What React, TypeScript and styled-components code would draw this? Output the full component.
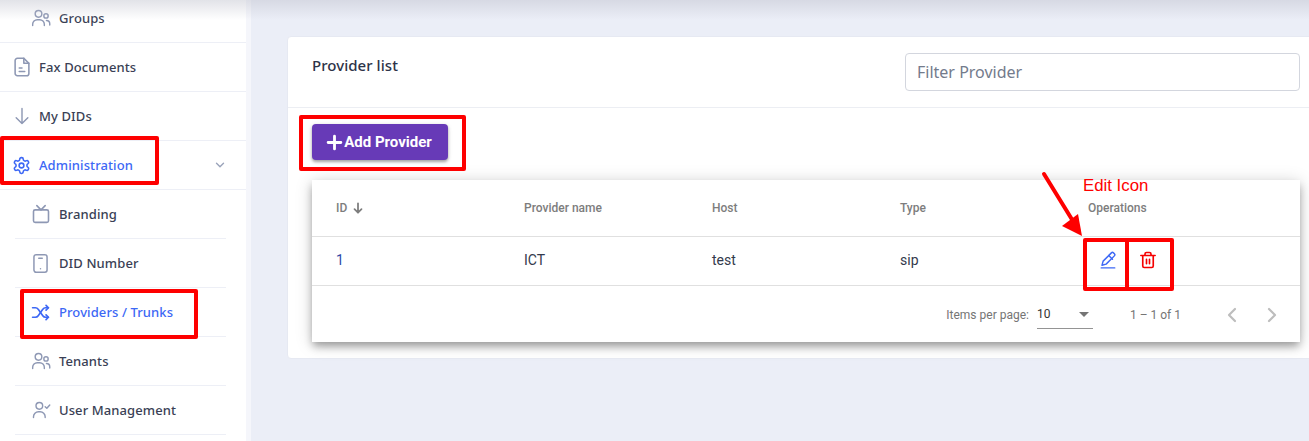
import React from "react";
import styled, { createGlobalStyle } from "styled-components";

const Global = createGlobalStyle`
  html, body { margin: 0; padding: 0; }
  body { width: 1309px; height: 441px; overflow: hidden; background: #ebeef7; font-family: "Noto Sans", sans-serif; }
`;

const Page = styled.div`
  position: relative;
  display: flex;
  width: 1309px;
  height: 441px;
  overflow: hidden;
`;

const Sidebar = styled.aside`
  width: 251px;
  height: 441px;
  box-sizing: border-box;
  flex: none;
  background: #fff;
  border-right: 5px solid #f5f6fb;
  display: flex;
  flex-direction: column;
`;

const TopShade = styled.div`
  position: absolute;
  left: 0;
  top: 0;
  width: 100%;
  height: 20px;
  background: linear-gradient(to bottom, rgba(190, 192, 204, 0.45), rgba(190, 192, 204, 0));
  pointer-events: none;
`;

const Row = styled.div<{ $sub?: boolean; $inset?: boolean; $active?: boolean; $first?: boolean }>`
  height: ${(p) => (p.$first ? 36 : 48)}px;
  padding-bottom: ${(p) => (p.$first ? 6 : 0)}px;
  box-sizing: content-box;
  flex: none;
  display: flex;
  align-items: center;
  gap: ${(p) => (p.$sub ? 10 : 9)}px;
  margin-left: ${(p) => (p.$inset ? 15 : 0)}px;
  margin-right: ${(p) => (p.$inset ? 20 : 0)}px;
  padding-left: ${(p) => (p.$inset ? 17 : p.$sub ? 32 : 13)}px;
  padding-right: 20px;
  border-bottom: 1px solid #edeff6;
  font-size: 13px;
  font-weight: 500;
  letter-spacing: 0.1px;
  color: ${(p) => (p.$active ? "#3d68f5" : "#3a3f55")};
`;

const IconSlot = styled.span<{ $active?: boolean }>`
  width: 17px;
  height: 18px;
  flex: none;
  display: flex;
  align-items: center;
  justify-content: center;
  color: ${(p) => (p.$active ? "#3d68f5" : "#8e98b4")};
`;

const RowLabel = styled.span`
  flex: 1;
`;

const Chevron = styled.span`
  display: flex;
  margin-right: -1px;
  color: #9aa3ba;
`;

const Main = styled.main`
  flex: 1;
  min-width: 0;
  padding: 36px 0 0 36px;
`;

const Panel = styled.section`
  width: 1040px;
  height: 323px;
  background: #fff;
  border: 1px solid #e6e9f2;
  border-radius: 4px;
  box-sizing: border-box;
`;

const PanelHead = styled.header`
  height: 70px;
  border-bottom: 1px solid #eceef3;
  display: flex;
  justify-content: space-between;
  padding: 0 26px 0 24px;
`;

const PanelTitle = styled.h2`
  margin: 18px 0 0;
  font-size: 15px;
  line-height: 20px;
  font-weight: 500;
  letter-spacing: 0.05px;
  color: #2d3348;
`;

const FilterInput = styled.div`
  width: 395px;
  height: 38px;
  margin-top: 16px;
  box-sizing: border-box;
  border: 1px solid #d3d6de;
  border-radius: 4px;
  padding-left: 11px;
  display: flex;
  align-items: center;
  font-size: 16px;
  color: #737b8c;
`;

const PanelBody = styled.div`
  padding: 16px 0 0 24px;
`;

const AddButton = styled.button`
  height: 36px;
  width: 136px;
  border: 0;
  border-radius: 4px;
  background: #673ab7;
  color: #fff;
  display: flex;
  align-items: center;
  justify-content: center;
  gap: 1px;
  padding: 0 2px 0 0;
  font-family: Roboto, sans-serif;
  font-size: 15px;
  font-weight: 700;
  box-shadow: 0 2px 3px rgba(0, 0, 0, 0.3), 0 1px 5px rgba(0, 0, 0, 0.12);
`;

const TableCard = styled.div`
  width: 988px;
  height: 162px;
  margin-top: 20px;
  background: #fff;
  font-family: Roboto, sans-serif;
  box-shadow: 0 5px 8px -1px rgba(0, 0, 0, 0.32), 0 2px 16px rgba(0, 0, 0, 0.18);
`;

const TableRow = styled.div<{ $head?: boolean }>`
  display: grid;
  grid-template-columns: 188px 188px 188px 188px 1fr;
  align-items: center;
  height: ${(p) => (p.$head ? 56 : 46)}px;
  padding-bottom: ${(p) => (p.$head ? 0 : 2)}px;
  padding-left: 24px;
  border-bottom: 1px solid #e0e0e0;
  font-size: ${(p) => (p.$head ? 12 : 14)}px;
  font-weight: ${(p) => (p.$head ? 500 : 400)};
  color: ${(p) => (p.$head ? "#7d7d7d" : "#333a4c")};
`;

const HeadId = styled.span`
  display: flex;
  align-items: center;
  gap: 4px;
  color: #7d7d7d;
`;

const IdLink = styled.span`
  color: #3049a8;
`;

const Ops = styled.div`
  display: flex;
  align-items: center;
  gap: 22px;
  padding-left: 11px;
`;

const OpIcon = styled.span<{ $danger?: boolean }>`
  display: flex;
  color: ${(p) => (p.$danger ? "#f50000" : "#3d68f5")};
`;

const Pager = styled.div`
  height: 57px;
  display: flex;
  align-items: center;
  justify-content: flex-end;
  font-size: 12px;
  color: #757575;
`;

const PagerLabel = styled.span`
  margin-right: 8px;
`;

const PageSelect = styled.div`
  width: 56px;
  height: 28px;
  box-sizing: border-box;
  border-bottom: 1px solid #949494;
  display: flex;
  align-items: center;
  justify-content: space-between;
  padding-right: 4px;
  color: #333;
`;

const Caret = styled.span`
  width: 0;
  height: 0;
  border-left: 5px solid transparent;
  border-right: 5px solid transparent;
  border-top: 5px solid #757575;
`;

const Range = styled.span`
  margin-left: 37px;
  margin-right: 39px;
`;

const PagerNav = styled.span`
  display: flex;
  gap: 16px;
  margin-right: 16px;
  color: #bdbdbd;
`;

const Mark = styled.div<{ $x: number; $y: number; $w: number; $h: number }>`
  position: absolute;
  left: ${(p) => p.$x}px;
  top: ${(p) => p.$y}px;
  width: ${(p) => p.$w}px;
  height: ${(p) => p.$h}px;
  box-sizing: border-box;
  border: 4px solid #fe0000;
  border-radius: 2px;
  pointer-events: none;
`;

const Note = styled.div`
  position: absolute;
  left: 1083px;
  top: 176px;
  font-family: "Liberation Sans", Arial, sans-serif;
  font-size: 16.8px;
  line-height: 20px;
  color: #fe0000;
`;

const Arrow = styled.svg`
  position: absolute;
  left: 1036px;
  top: 168px;
`;

const Stroke = ({ size = 18, sw = 1.6, children }: { size?: number; sw?: number; children: React.ReactNode }) => (
  <svg width={size} height={size} viewBox="0 0 24 24" fill="none" stroke="currentColor" strokeWidth={sw} strokeLinecap="round" strokeLinejoin="round" style={{ flex: "none" }}>
    {children}
  </svg>
);

const UsersIcon = () => (
  <Stroke size={20} sw={1.7}>
    <circle cx="9" cy="7" r="4" />
    <path d="M2 21v-1.500A5.500 5.500 0 0 1 7.500 14h3a5.500 5.500 0 0 1 5.500 5.500V21" />
    <circle cx="18" cy="9.500" r="2.600" />
    <path d="M18.500 15a4 4 0 0 1 4 4v1.500" />
  </Stroke>
);
const DocIcon = () => (
  <Stroke size={22} sw={1.7}>
    <path d="M14 2.500H7a2.500 2.500 0 0 0-2.500 2.500v14A2.500 2.500 0 0 0 7 21.500h10a2.500 2.500 0 0 0 2.500-2.500V8z" />
    <path d="M14 2.500V8h5.500M9 13h3M9 17h6" />
  </Stroke>
);
const DownIcon = () => (
  <Stroke size={20} sw={1.7}>
    <path d="M12 3v18M5 14l7 7 7-7" />
  </Stroke>
);
const GearIcon = () => (
  <Stroke size={19} sw={2}>
    <circle cx="12" cy="12" r="3" />
    <path d="M12.220 2h-.440a2 2 0 0 0-2 2v.180a2 2 0 0 1-1 1.730l-.430.250a2 2 0 0 1-2 0l-.150-.080a2 2 0 0 0-2.730.730l-.220.380a2 2 0 0 0 .730 2.730l.150.100a2 2 0 0 1 1 1.720v.510a2 2 0 0 1-1 1.740l-.150.090a2 2 0 0 0-.730 2.730l.220.380a2 2 0 0 0 2.730.730l.150-.080a2 2 0 0 1 2 0l.430.250a2 2 0 0 1 1 1.730V20a2 2 0 0 0 2 2h.440a2 2 0 0 0 2-2v-.180a2 2 0 0 1 1-1.730l.430-.250a2 2 0 0 1 2 0l.150.080a2 2 0 0 0 2.730-.730l.220-.390a2 2 0 0 0-.730-2.730l-.150-.080a2 2 0 0 1-1-1.740v-.500a2 2 0 0 1 1-1.740l.150-.090a2 2 0 0 0 .730-2.730l-.220-.380a2 2 0 0 0-2.730-.730l-.150.080a2 2 0 0 1-2 0l-.430-.250a2 2 0 0 1-1-1.730V4a2 2 0 0 0-2-2z" />
  </Stroke>
);
const TvIcon = () => (
  <Stroke size={20} sw={1.9}>
    <rect x="3" y="7" width="18" height="15" rx="2" />
    <path d="M17 2l-5 5-5-5" />
  </Stroke>
);
const PhoneIcon = () => (
  <Stroke size={21} sw={1.7}>
    <rect x="4.500" y="2" width="15" height="20" rx="2.500" />
    <path d="M10 6h4M12 18h.010" />
  </Stroke>
);
const ShuffleIcon = () => (
  <Stroke size={19} sw={2.1}>
    <path d="M2 6h3.500c1.500 0 2.800.700 3.600 1.900l5.800 8.200c.800 1.200 2.100 1.900 3.600 1.900H22" />
    <path d="M2 18h3.500c1.500 0 2.800-.700 3.600-1.900l5.800-8.200C15.700 6.700 17 6 18.500 6H22" />
    <path d="M19 3l3 3-3 3M19 15l3 3-3 3" />
  </Stroke>
);
const UserCheckIcon = () => (
  <Stroke size={20} sw={1.7}>
    <circle cx="10" cy="7" r="4" />
    <path d="M3 21v-1a6 6 0 0 1 6-6h2a6 6 0 0 1 6 6v1" />
    <path d="M17 8l2 2 3.500-4" />
  </Stroke>
);
const PencilIcon = () => (
  <Stroke size={18} sw={1.9}>
    <path d="M3 22.500h18" />
    <path d="M14.500 4.500l2-2a2 2 0 0 1 2.800 0l1.200 1.200a2 2 0 0 1 0 2.800L9.500 17.500 4 19l1.500-5.500z" />
    <path d="M13 6l5 5" />
  </Stroke>
);
const TrashIcon = () => (
  <Stroke size={18} sw={2.2}>
    <path d="M2.500 6h19M19 6v14a2 2 0 0 1-2 2H7a2 2 0 0 1-2-2V6M8 6V4a2 2 0 0 1 2-2h4a2 2 0 0 1 2 2v2" />
    <path d="M10 11v6M14 11v6" />
  </Stroke>
);

type Item = { label: string; icon: React.ReactNode; sub?: boolean; inset?: boolean; active?: boolean; chevron?: boolean; first?: boolean };

const items: Item[] = [
  { label: "Groups", icon: <UsersIcon />, sub: true, first: true },
  { label: "Fax Documents", icon: <DocIcon /> },
  { label: "My DIDs", icon: <DownIcon /> },
  { label: "Administration", icon: <GearIcon />, active: true, chevron: true },
  { label: "Branding", icon: <TvIcon />, sub: true, inset: true },
  { label: "DID Number", icon: <PhoneIcon />, sub: true, inset: true },
  { label: "Providers / Trunks", icon: <ShuffleIcon />, sub: true, inset: true, active: true },
  { label: "Tenants", icon: <UsersIcon />, sub: true, inset: true },
  { label: "User Management", icon: <UserCheckIcon />, sub: true, inset: true },
];

export default function App() {
  return (
    <Page>
      <Global />
      <Sidebar>
        {items.map((it) => (
          <Row key={it.label} $sub={it.sub} $inset={it.inset} $active={it.active} $first={it.first}>
            <IconSlot $active={it.active}>{it.icon}</IconSlot>
            <RowLabel>{it.label}</RowLabel>
            {it.chevron && (
              <Chevron>
                <Stroke size={14} sw={2.4}>
                  <path d="M6 9l6 6 6-6" />
                </Stroke>
              </Chevron>
            )}
          </Row>
        ))}
      </Sidebar>
      <Main>
        <Panel>
          <PanelHead>
            <PanelTitle>Provider list</PanelTitle>
            <FilterInput>Filter Provider</FilterInput>
          </PanelHead>
          <PanelBody>
            <AddButton>
              <Stroke size={17} sw={4}>
                <path d="M12 3v18M3 12h18" />
              </Stroke>
              Add Provider
            </AddButton>
            <TableCard>
              <TableRow $head>
                <HeadId>
                  ID
                  <Stroke size={14} sw={3}>
                    <path d="M12 4v16M6 14l6 6 6-6" />
                  </Stroke>
                </HeadId>
                <span>Provider name</span>
                <span>Host</span>
                <span>Type</span>
                <span>Operations</span>
              </TableRow>
              <TableRow>
                <IdLink>1</IdLink>
                <span>ICT</span>
                <span>test</span>
                <span>sip</span>
                <Ops>
                  <OpIcon><PencilIcon /></OpIcon>
                  <OpIcon $danger><TrashIcon /></OpIcon>
                </Ops>
              </TableRow>
              <Pager>
                <PagerLabel>Items per page:</PagerLabel>
                <PageSelect>
                  10
                  <Caret />
                </PageSelect>
                <Range>1 – 1 of 1</Range>
                <PagerNav>
                  <Stroke size={24} sw={2.2}><path d="M15 6l-6 6 6 6" /></Stroke>
                  <Stroke size={24} sw={2.2}><path d="M9 6l6 6-6 6" /></Stroke>
                </PagerNav>
              </Pager>
            </TableCard>
          </PanelBody>
        </Panel>
      </Main>
      <TopShade />
      <Mark $x={0} $y={136} $w={159} $h={49} />
      <Mark $x={20} $y={289} $w={178} $h={50} />
      <Mark $x={299} $y={115} $w={167} $h={56} />
      <Mark $x={1083} $y={238} $w={46} $h={53} />
      <Mark $x={1125} $y={238} $w={49} $h={53} />
      <Note>Edit Icon</Note>
      <Arrow width="60" height="72" viewBox="0 0 60 72">
        <path d="M8 6L40 58" stroke="#fe0000" strokeWidth="4" strokeLinecap="round" />
        <path d="M46 68L26 58L42 46z" fill="#fe0000" />
      </Arrow>
    </Page>
  );
}
